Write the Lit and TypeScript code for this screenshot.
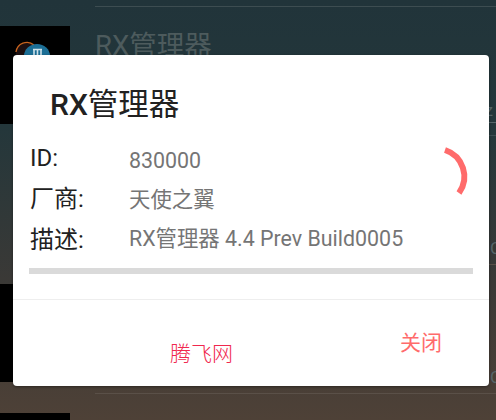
import { LitElement, html, css } from "lit";
import { customElement } from "lit/decorators.js";

@customElement("app-root")
export class AppRoot extends LitElement {
  static styles = css`
    :host {
      display: block;
      position: relative;
      width: 496px;
      height: 420px;
      overflow: hidden;
      font-family: Roboto, "Noto Sans CJK SC", sans-serif;
      background: linear-gradient(180deg, #21343a 0%, #24373b 30%, #3b3936 68%, #4e4137 100%);
    }
    .list { display: flex; flex-direction: column; padding-top: 6px; }
    .row { display: flex; height: 129px; flex: none; gap: 25px; }
    .thumb { width: 70px; height: 98px; margin-top: 20px; background: #000; flex: none; display: flex; }
    .thumb.clear { background: transparent; }
    .thumb svg { width: 40px; height: 40px; margin: 12px 0 0 13px; }
    .body {
      flex: 1;
      min-width: 0;
      border-top: 1.5px solid #3d4d51;
      display: flex;
      flex-direction: column;
    }
    .row.warm .body { border-top-color: #5a5048; }
    .name { font-size: 27.5px; line-height: 36px; margin-top: 21px; color: #4d5b5d; white-space: nowrap; }
    .name.far { margin-left: 70px; margin-top: 18px; font-size: 18px; color: #7c8a90; }
    .edge { align-self: flex-end; font-size: 17px; line-height: 24px; color: #56666a; white-space: nowrap; }
    .edge.z { margin-top: 34px; width: 16px; text-align: right; padding-right: 3px; box-sizing: border-box; border-bottom: 1.5px solid #56666a; }
    .edge.c { margin-top: 99.5px; width: 6px; }

    .dialog {
      position: absolute;
      left: 13px;
      top: 55px;
      width: 476px;
      height: 331px;
      box-sizing: border-box;
      background: #fff;
      border-radius: 4px;
      box-shadow: 0 1px 3px rgba(0, 0, 0, 0.4);
      display: flex;
      flex-direction: column;
    }
    .title {
      margin: 29px 0 0 37px;
      font-size: 30px;
      line-height: 42px;
      font-weight: 500;
      color: #212121;
    }
    .title span { font-weight: 400; font-size: 30.5px; }
    .info { display: flex; margin: 12px 0 0 17px; }
    .labels { width: 99px; display: flex; flex-direction: column; }
    .labels div { font-size: 24px; line-height: 41px; color: #212121; }
    .values { display: flex; flex-direction: column; padding-top: 3px; }
    .values div { font-size: 21.4px; line-height: 39px; color: #757575; white-space: nowrap; }
    .bar { height: 6px; background: #dadada; margin: 7px 16px 0; flex: none; }
    .rule { height: 1px; background: #eeeeee; margin-top: 25px; flex: none; }
    .actions { flex: 1; display: flex; }
    .link { font-size: 21px; font-weight: 300; color: #f0284e; line-height: 30px; margin: 39px 0 0 157px; }
    .close { font-size: 21px; color: #ff6b6b; line-height: 30px; margin: 28px 47px 0 auto; }
    .spin { position: absolute; left: 420px; top: 84px; width: 48px; height: 60px; display: block; }
    .spin path { fill: none; stroke: #ff6b6b; stroke-width: 6; }
  `;

  private row(name: string, edge: string, opts: { clear?: boolean; warm?: boolean; far?: boolean } = {}) {
    return html`
      <div class="row ${opts.warm ? "warm" : ""}">
        <div class="thumb ${opts.clear ? "clear" : ""}">
          ${opts.clear
            ? ""
            : html`<svg viewBox="0 0 40 40">
                <circle cx="14" cy="16" r="11" fill="#1c0f10" />
                <path d="M3 14A11 11 0 0 1 21 7" stroke="#c8641e" stroke-width="1.3" fill="none" />
                <ellipse cx="24" cy="18" rx="13" ry="12" fill="#1c6f96" />
                <path d="M20 11.5h9M21 12v8M24.5 12v8M28 12v8" stroke="#cfe2ea" stroke-width="1.6" fill="none" />
              </svg>`}
        </div>
        <div class="body">
          ${name ? html`<div class="name ${opts.far ? "far" : ""}">${name}</div>` : ""}
          ${edge === "z" ? html`<div class="edge z">z</div>` : ""}
          ${edge === "C" ? html`<div class="edge c">C</div>` : ""}
        </div>
      </div>
    `;
  }

  render() {
    return html`
      <div class="list">
        ${this.row("RX管理器", "z")}
        ${this.row("", "C", { clear: true })}
        ${this.row("", "C", { warm: true })}
        ${this.row("天使之翼", "", { warm: true, far: true })}
      </div>
      <div class="dialog">
        <div class="title">RX<span>管理器</span></div>
        <div class="info">
          <div class="labels">
            <div>ID:</div>
            <div>厂商:</div>
            <div>描述:</div>
          </div>
          <div class="values">
            <div>830000</div>
            <div>天使之翼</div>
            <div>RX管理器 4.4 Prev Build0005</div>
          </div>
        </div>
        <div class="bar"></div>
        <div class="rule"></div>
        <div class="actions">
          <div class="link">腾飞网</div>
          <div class="close">关闭</div>
        </div>
        <svg class="spin" viewBox="433 139 48 60">
          <path d="M445 150A28 28 0 0 1 459 193" />
        </svg>
      </div>
    `;
  }
}
